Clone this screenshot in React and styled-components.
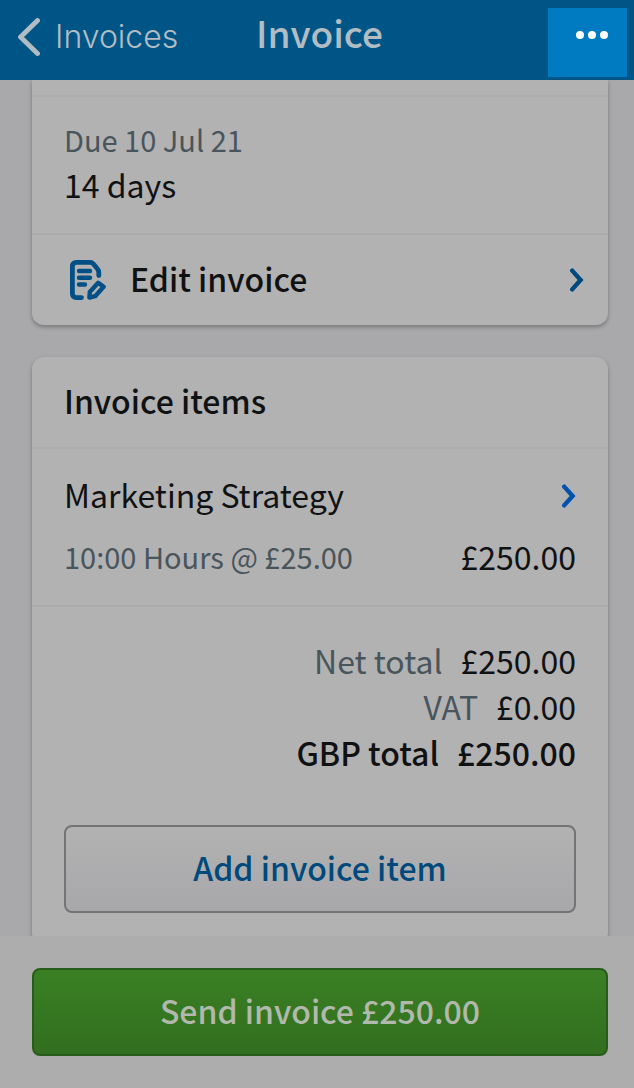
import React from 'react';
import styled, { createGlobalStyle } from 'styled-components';

const GlobalStyle = createGlobalStyle`
    * {
        box-sizing: border-box;
    }
    body {
        margin: 0;
        background: #adadad;
    }
    body, button {
        font-family: 'Noto Sans CJK SC', 'Noto Sans', sans-serif;
    }
`;

const Page = styled.div`
    display: flex;
    flex-direction: column;
    height: 100vh;
    font-size: 32px;
    line-height: 46px;
    color: #101112;
`;

const Header = styled.header`
    display: grid;
    grid-template-columns: 1fr auto 1fr;
    align-items: center;
    flex-shrink: 0;
    height: 80px;
    padding: 0 7px 8px 12px;
    background: #005587;
    color: #b2bcc3;
`;

const BackLink = styled.a`
    display: flex;
    align-items: center;
    gap: 15px;
    padding: 0 0 4px 6px;
    font-family: Inter, sans-serif;
    font-size: 32px;
    font-weight: 300;
    color: inherit;
    text-decoration: none;
`;

const Title = styled.h1`
    margin: 0;
    padding-bottom: 14px;
    font-size: 37px;
    font-weight: 500;
`;

const MoreButton = styled.button`
    display: flex;
    align-items: center;
    justify-content: center;
    justify-self: end;
    align-self: start;
    width: 79px;
    height: 69px;
    margin-top: 8px;
    padding: 0 0 15px 8px;
    border: 0;
    background: #007ac0;
    color: #fff;
`;

const Content = styled.main`
    display: flex;
    flex-direction: column;
    gap: 32px;
    flex: 1;
    min-height: 0;
    padding: 0 26px 0 32px;
    overflow-y: auto;
    scrollbar-width: none;
    background: #a9a9ac;
`;

const Card = styled.section`
    flex-shrink: 0;
    border-radius: ${({ $continued }) => ($continued ? '0 0 12px 12px' : '12px')};
    background: #b2b2b2;
    box-shadow: 0 2px 4px rgba(0, 0, 0, 0.3);
`;

const PreviousRow = styled.div`
    height: 15px;
`;

const DueRow = styled.div`
    padding: 20px 32px 26px;
    border-top: 2px solid #acacac;
`;

const Label = styled.div`
    font-size: 29px;
    line-height: 44px;
    color: #49555c;
`;

const CardTitle = styled.h2`
    margin: 0;
    padding: 20px 32px 24px;
    font-size: 32px;
    font-weight: 500;
`;

const ActionLink = styled.a`
    display: flex;
    align-items: center;
    justify-content: space-between;
    padding: 20px 24px 24px 38px;
    border-top: 2px solid #acacac;
    font-weight: 500;
    color: inherit;
    text-decoration: none;
`;

const ActionName = styled.span`
    display: flex;
    align-items: center;
    gap: 24px;
`;

const RowIcon = styled.svg`
    flex-shrink: 0;
    margin-top: 4px;
    fill: none;
    stroke-linecap: round;
`;

const Item = styled.a`
    display: grid;
    gap: 16px;
    padding: 22px 32px 26px;
    border-top: 2px solid #acacac;
    color: inherit;
    text-decoration: none;
`;

const Line = styled.div`
    display: flex;
    align-items: center;
    justify-content: space-between;
`;

const Totals = styled.dl`
    margin: 0;
    padding: 30px 32px 50px;
    border-top: 2px solid #acacac;
`;

const Total = styled.div`
    display: flex;
    justify-content: flex-end;
    gap: 18px;
    font-weight: ${({ $strong }) => ($strong ? 500 : 400)};
    dt {
        color: ${({ $strong }) => ($strong ? 'inherit' : '#49555c')};
    }
    dd {
        margin: 0;
    }
`;

const CardFooter = styled.div`
    padding: 0 32px 32px;
`;

const Button = styled.button`
    display: block;
    width: 100%;
    height: 88px;
    padding: 0 0 4px;
    border: 2px solid ${({ $primary }) => ($primary ? '#285c1a' : '#747476')};
    border-radius: 8px;
    background: ${({ $primary }) =>
        $primary
            ? 'linear-gradient(#3a8023, #326e1f)'
            : 'linear-gradient(#b2b2b2, #a8a8ab)'};
    font-size: 32px;
    font-weight: 500;
    line-height: 46px;
    color: ${({ $primary }) => ($primary ? '#b1b9ad' : '#00497c')};
`;

const BottomBar = styled.footer`
    flex-shrink: 0;
    padding: 32px 26px 32px 32px;
    background: #adadad;
`;

const BackIcon = () => (
    <svg width="22" height="38" viewBox="0 0 22 38" fill="none" aria-hidden="true">
        <path d="M19.5 2.5 L2.5 19 L19.5 35.5" stroke="currentColor" strokeWidth="4.8" strokeLinecap="round" strokeLinejoin="round" />
    </svg>
);

const MoreIcon = () => (
    <svg width="32" height="8" viewBox="0 0 32 8" fill="currentColor" aria-hidden="true">
        <circle cx="4" cy="4" r="4" />
        <circle cx="16" cy="4" r="4" />
        <circle cx="28" cy="4" r="4" />
    </svg>
);

const Chevron = ({ color }) => (
    <RowIcon width="14" height="24" viewBox="0 0 14 24" stroke={color} aria-hidden="true">
        <path d="M2.2 2.6 L10.6 12 L2.2 21.4" strokeWidth="4.4" />
    </RowIcon>
);

const EditIcon = () => (
    <RowIcon width="36" height="40" viewBox="0 0 36 40" stroke="#004f86" strokeLinejoin="round" aria-hidden="true">
        <path d="M11.5 37.6 H6.5 Q2.4 37.6 2.4 33.5 V6.5 Q2.4 2.4 6.5 2.4 H20 Q22 2.4 23.4 4 L27.4 8.8 Q28.8 10.4 28.8 12.5 V15.5" strokeWidth="4.8" />
        <path d="M9 11 H20 M9 17.8 H20 M9 24.5 H15" strokeWidth="4.4" />
        <path d="M19.4 37.6 L19.8 32 L28.2 22.8 L33.6 26.8 L25.2 36.2 Z" strokeWidth="4.4" />
    </RowIcon>
);

const totals = [
    { label: 'Net total', amount: '£250.00' },
    { label: 'VAT', amount: '£0.00' },
    { label: 'GBP total', amount: '£250.00', strong: true },
];

const App = () => {
    return (
        <Page>
            <GlobalStyle />
            <Header>
                <BackLink href="#invoices">
                    <BackIcon />
                    Invoices
                </BackLink>
                <Title>Invoice</Title>
                <MoreButton type="button" aria-label="More">
                    <MoreIcon />
                </MoreButton>
            </Header>
            <Content>
                <Card $continued>
                    <PreviousRow />
                    <DueRow>
                        <Label>Due 10 Jul 21</Label>
                        <div>14 days</div>
                    </DueRow>
                    <ActionLink href="#edit">
                        <ActionName>
                            <EditIcon />
                            Edit invoice
                        </ActionName>
                        <Chevron color="#00497c" />
                    </ActionLink>
                </Card>
                <Card>
                    <CardTitle>Invoice items</CardTitle>
                    <Item href="#item">
                        <Line>
                            Marketing Strategy
                            <Chevron color="#0052ae" />
                        </Line>
                        <Line>
                            <Label>10:00 Hours @ £25.00</Label>
                            <span>£250.00</span>
                        </Line>
                    </Item>
                    <Totals>
                        {totals.map(({ label, amount, strong }) => (
                            <Total key={label} $strong={strong}>
                                <dt>{label}</dt>
                                <dd>{amount}</dd>
                            </Total>
                        ))}
                    </Totals>
                    <CardFooter>
                        <Button type="button">Add invoice item</Button>
                    </CardFooter>
                </Card>
            </Content>
            <BottomBar>
                <Button type="button" $primary>Send invoice £250.00</Button>
            </BottomBar>
        </Page>
    );
};

export default App;
